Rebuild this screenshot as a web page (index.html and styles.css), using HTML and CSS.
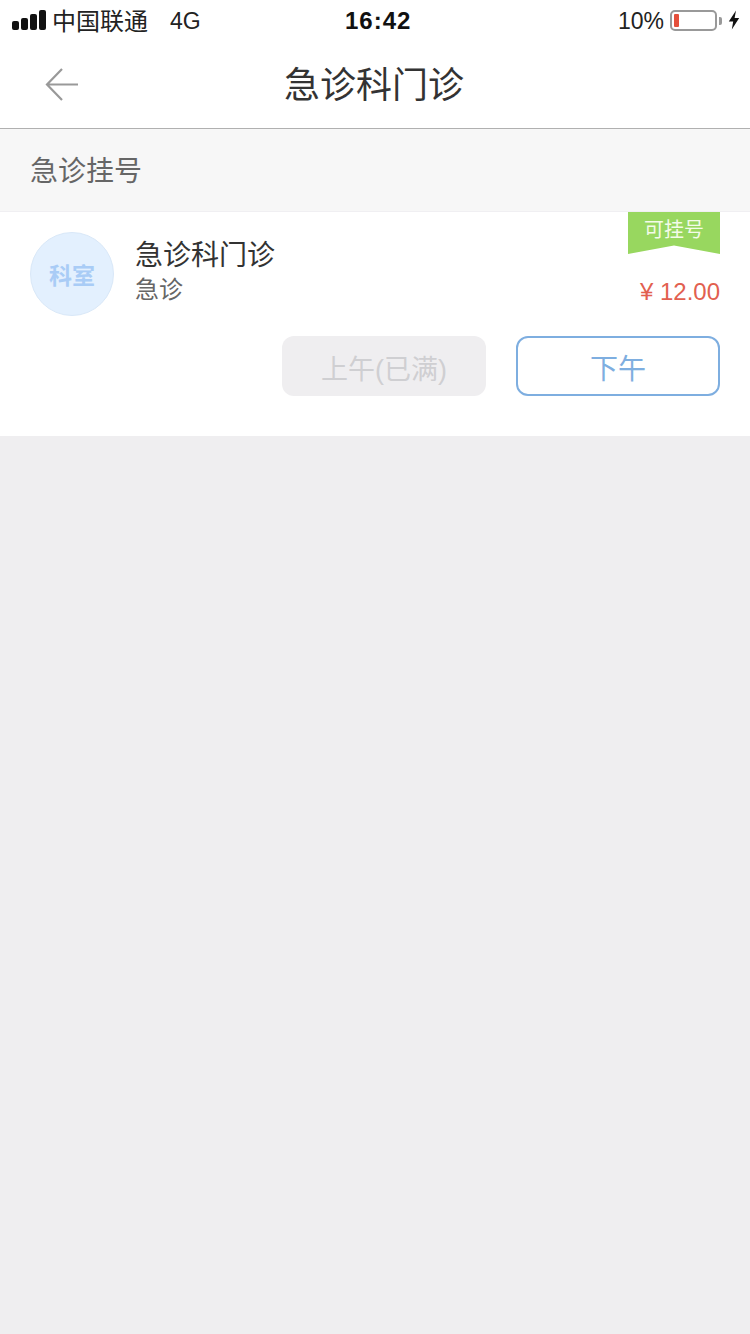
FILE: index.html
```html
<!DOCTYPE html>
<html lang="zh-CN">
<head>
  <meta charset="UTF-8">
  <meta name="viewport" content="width=device-width, initial-scale=1.0">
  <title>急诊科门诊</title>
  <link rel="stylesheet" href="styles.css">
</head>
<body>
  <div class="status-bar">
    <div class="status-left">
      <div class="signal">
        <span class="bar bar1"></span>
        <span class="bar bar2"></span>
        <span class="bar bar3"></span>
        <span class="bar bar4"></span>
      </div>
      <span class="carrier">中国联通</span>
      <span class="network">4G</span>
    </div>
    <div class="status-time">16:42</div>
    <div class="status-right">
      <span class="percent">10%</span>
      <div class="battery"><span class="battery-level"></span></div>
      <span class="battery-cap"></span>
      <svg class="bolt" width="12" height="20" viewBox="0 0 12 20">
        <path d="M8 0.5 L0.8 11.5 H5.2 L3.8 19.5 L11.2 8 H6.6 Z" fill="#111"/>
      </svg>
    </div>
  </div>

  <div class="nav-bar">
    <svg class="back" width="36" height="36" viewBox="0 0 36 36">
      <path d="M34 17.5 H4 M18 2 L3 17.5 L18 33" fill="none" stroke="#999" stroke-width="2.2"/>
    </svg>
    <h1 class="nav-title">急诊科门诊</h1>
  </div>

  <div class="section-title">急诊挂号</div>

  <div class="card">
    <div class="tag">可挂号</div>
    <div class="card-top">
      <div class="avatar">科室</div>
      <div class="info">
        <div class="name">急诊科门诊</div>
        <div class="dept">急诊</div>
      </div>
      <div class="price">¥ 12.00</div>
    </div>
    <div class="buttons">
      <button class="btn btn-disabled" type="button">上午(已满)</button>
      <button class="btn btn-active" type="button">下午</button>
    </div>
  </div>
</body>
</html>
```

FILE: styles.css
```css
/* General */
html, body {
  height: 100%;
}
body {
  margin: 0;
  background: #efeef0;
  font-family: "Liberation Sans", "Noto Sans CJK SC", sans-serif;
  color: #333;
}

/* Status bar */
.status-bar {
  height: 40px;
  background: #fff;
  display: flex;
  align-items: center;
  justify-content: space-between;
  padding: 0 10px 0 12px;
  position: relative;
  color: #111;
}
.status-left {
  display: flex;
  align-items: center;
}
.signal {
  display: flex;
  align-items: flex-end;
  gap: 2px;
  height: 20px;
  margin-right: 6px;
}
.bar {
  width: 7px;
  background: #111;
  border-radius: 2px;
}
.bar1 { height: 9px; }
.bar2 { height: 12px; }
.bar3 { height: 16px; }
.bar4 { height: 20px; }
.carrier {
  font-size: 24px;
  color: #222;
  margin-bottom: 2px;
}
.network {
  font-size: 23px;
  margin: 2px 0 0 22px;
  color: #222;
}
.status-time {
  position: absolute;
  left: 345px;
  top: 6px;
  font-size: 24px;
  line-height: 30px;
  font-weight: bold;
  letter-spacing: 1px;
}
.status-right {
  display: flex;
  align-items: center;
}
.percent {
  font-size: 23px;
  margin: 2px 6px 0 0;
  color: #222;
}
.battery {
  width: 47px;
  height: 21px;
  box-sizing: border-box;
  border: 2px solid #999;
  border-radius: 5px;
  padding: 2px;
  background: #fff;
  margin-top: 1px;
}
.battery-level {
  display: block;
  width: 5px;
  height: 100%;
  background: #e5503c;
  border-radius: 1px;
}
.battery-cap {
  width: 3px;
  height: 8px;
  background: #999;
  margin: 1px 0 0 2px;
  border-radius: 0 2px 2px 0;
}
.bolt {
  margin-left: 6px;
}

/* Nav bar */
.nav-bar {
  height: 88px;
  background: #fff;
  border-bottom: 1px solid #b0b0b0;
  position: relative;
  display: flex;
  align-items: center;
  justify-content: center;
}
.back {
  position: absolute;
  left: 44px;
  top: 27px;
}
.nav-title {
  margin: 0;
  font-size: 36px;
  font-weight: normal;
  color: #333;
  padding: 0 2px 4px 0;
}

/* Section heading */
.section-title {
  height: 82px;
  line-height: 86px;
  padding-left: 30px;
  font-size: 28px;
  color: #666;
  background: #f7f7f7;
  border-bottom: 1px solid #f0eff2;
}

/* Card */
.card {
  position: relative;
  background: #fff;
  padding: 20px 30px 40px;
}
.tag {
  position: absolute;
  top: 0;
  right: 30px;
  width: 92px;
  height: 42px;
  padding-top: 5px;
  box-sizing: border-box;
  background: #98d75f;
  color: #f3fbe8;
  font-size: 20px;
  line-height: 26px;
  text-align: center;
  clip-path: polygon(0 0, 100% 0, 100% 100%, 50% 80%, 0 100%);
}
.card-top {
  display: flex;
  align-items: center;
  height: 84px;
}
.avatar {
  width: 84px;
  height: 84px;
  box-sizing: border-box;
  border: 1px solid #d9e8f8;
  border-radius: 50%;
  background: #e3f0fe;
  color: #a9ccf6;
  font-size: 23px;
  font-weight: bold;
  line-height: 86px;
  text-align: center;
  flex-shrink: 0;
}
.info {
  margin-left: 21px;
  flex: 1;
  padding-bottom: 2px;
}
.name {
  font-size: 28px;
  line-height: 34px;
  color: #333;
}
.dept {
  font-size: 24px;
  line-height: 34px;
  color: #666;
}
.price {
  align-self: flex-end;
  margin-bottom: 8px;
  font-size: 24px;
  line-height: 32px;
  color: #e2604f;
}

/* Buttons */
.buttons {
  display: flex;
  justify-content: flex-end;
  gap: 30px;
  margin-top: 20px;
}
.btn {
  width: 204px;
  height: 60px;
  border-radius: 12px;
  font-family: inherit;
  font-size: 28px;
  padding: 2px 0 0;
}
.btn-disabled {
  background: #efeef0;
  border: none;
  color: #cfcfd2;
  font-size: 27px;
}
.btn-active {
  background: #fff;
  border: 2px solid #7eaee0;
  color: #7eaee0;
}
```
